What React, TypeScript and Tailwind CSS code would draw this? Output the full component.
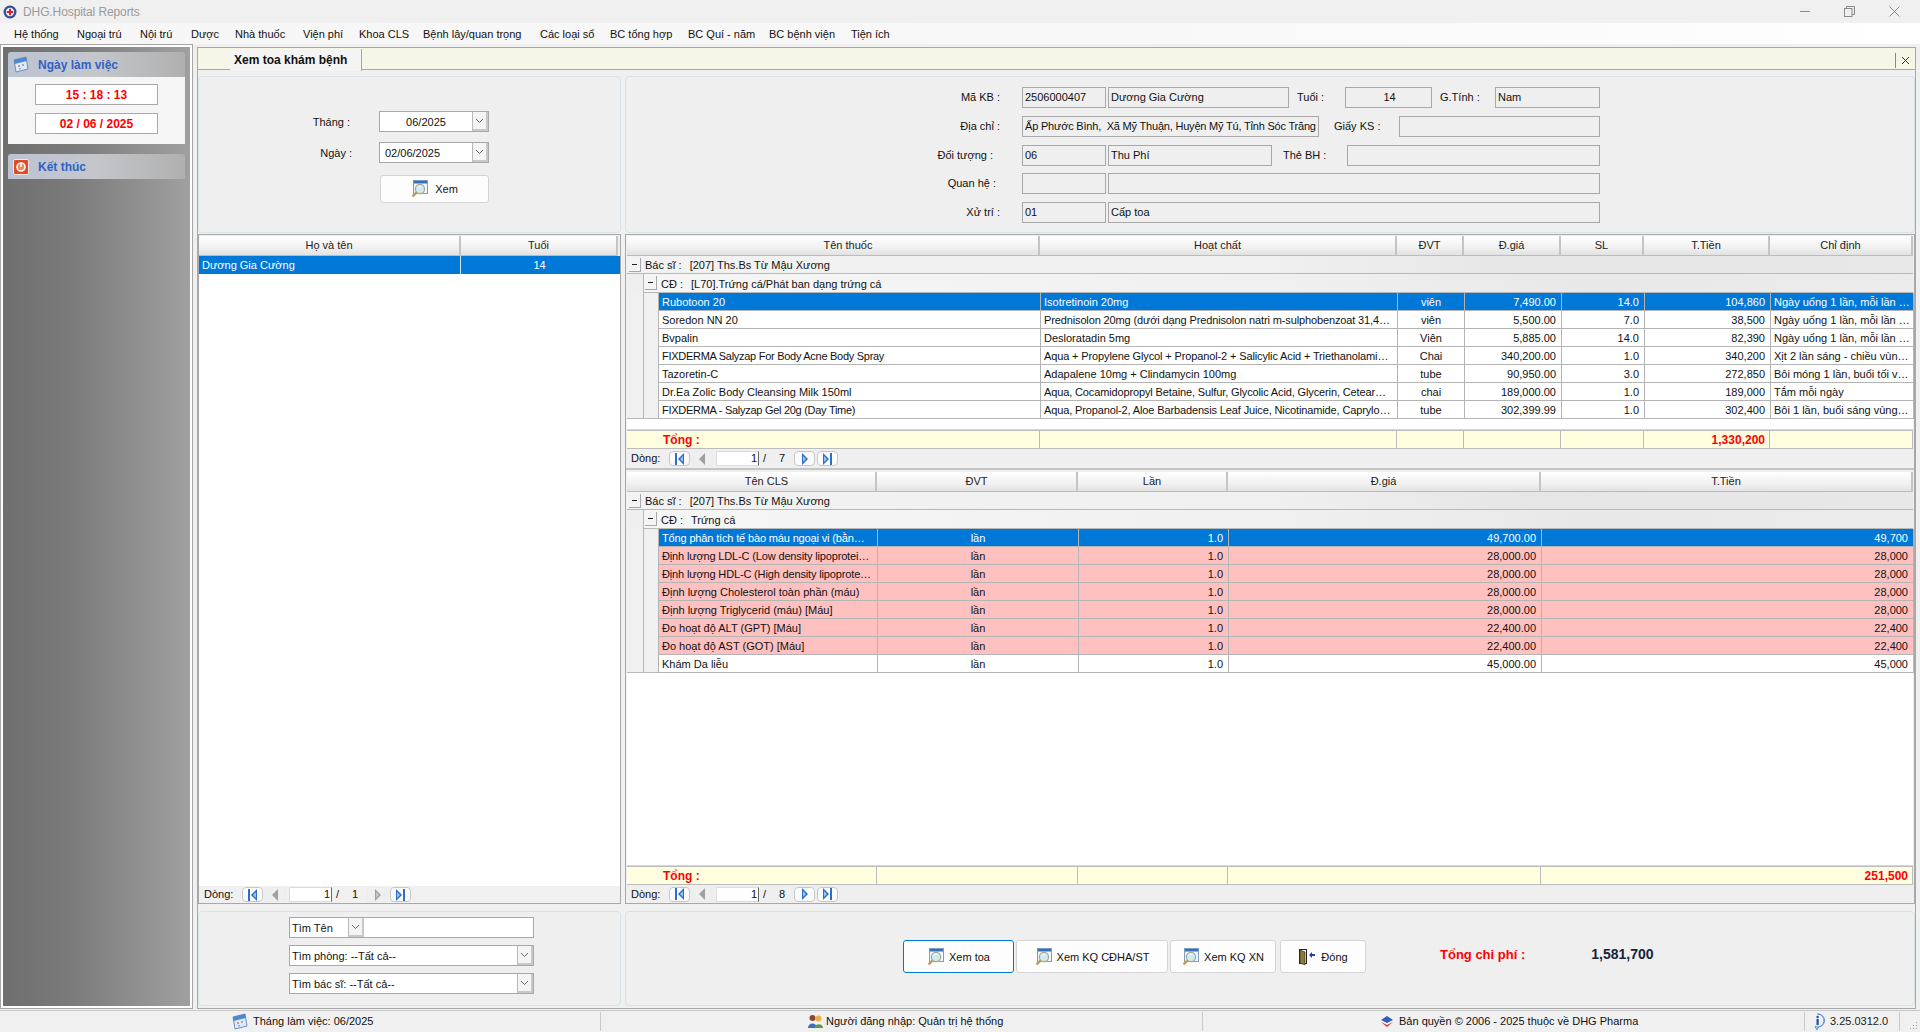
import React from "react";

const Mag = () => (
  <svg width="17" height="18" viewBox="0 0 17 18" className="shrink-0">
    <rect x="2.5" y="0.5" width="14" height="13" fill="#f2f6fb" stroke="#7d9cc4" />
    <rect x="3" y="1" width="13" height="2.5" fill="#2f6fc4" />
    <circle cx="9" cy="9" r="4.6" fill="#cfeaf0" stroke="#a9a78c" strokeWidth="1.2" />
    <path d="M7 7.5 A3 3 0 0 1 10 6" fill="none" stroke="#ffffff" strokeWidth="1" />
    <path d="M5.6 12.4 L1.5 16.5" stroke="#c49a4e" strokeWidth="2.4" />
  </svg>
);

const Cal = () => (
  <svg width="16" height="17" viewBox="0 0 16 17" className="shrink-0">
    <path d="M1 4 L13 1 L15 13 L3 16 Z" fill="#dfeaf8" stroke="#6a8fc0" />
    <path d="M1 4 L13 1 L13.7 5 L1.7 8 Z" fill="#4d87d0" />
    <rect x="5" y="9" width="2" height="2" fill="#e88a78" />
    <rect x="9" y="8" width="2" height="2" fill="#8fb0dc" />
    <rect x="6" y="12" width="2" height="1.5" fill="#8fb0dc" />
  </svg>
);

const Door = () => (
  <svg width="18" height="18" viewBox="0 0 18 18" className="shrink-0">
    <rect x="1.5" y="1.5" width="7" height="14" fill="#fff" stroke="#222" />
    <path d="M2 2 L7 4 V17 L2 15 Z" fill="#8a7a3c" stroke="#3a3418" strokeWidth="0.7" />
    <path d="M11 7 L14 4 V6 H17 V8 H14 V10 Z" fill="#1f3fb0" />
  </svg>
);

const Chev = () => (
  <svg width="9" height="6" viewBox="0 0 9 6">
    <path d="M1 1 L4.5 4.5 L8 1" fill="none" stroke="#666" />
  </svg>
);

const DropBtn = () => (
  <div className="w-[16px] h-full flex items-center justify-center bg-[#f4f4f4] border-l border-[#b8b8b8] border-r-2 border-b-2 border-r-[#c8c8c8] border-b-[#c8c8c8] shrink-0">
    <Chev />
  </div>
);

const NavGlyph = ({ kind, off }: { kind: string; off?: boolean }) => {
  const c = off ? "#a0a0a0" : "#2a6fc9";
  const inner = off ? "#c8c8c8" : "#9cc4ee";
  return (
    <div
      className={
        "w-[21px] h-[15px] rounded-[4px] border flex items-center justify-center shrink-0 " +
        (off ? "border-[#ececec] bg-[#efefef]" : "border-[#c4c8ce] bg-[#fbfbfb]")
      }
    >
      <svg width="11" height="12" viewBox="0 0 11 12">
        {kind === "first" && (
          <>
            <rect x="1" y="0" width="2" height="12" fill={c} />
            <path d="M10 0 V12 L4 6 Z" fill={c} />
            <path d="M9 3 V9 L6 6 Z" fill={inner} />
          </>
        )}
        {kind === "prev" && <path d="M8 0 V12 L2 6 Z" fill={c} />}
        {kind === "next" && (
          <>
            <path d="M3 0 V12 L9 6 Z" fill={c} />
            <path d="M4 3 V9 L7 6 Z" fill={inner} />
          </>
        )}
        {kind === "last" && (
          <>
            <path d="M1 0 V12 L7 6 Z" fill={c} />
            <path d="M2 3 V9 L5 6 Z" fill={inner} />
            <rect x="8" y="0" width="2" height="12" fill={c} />
          </>
        )}
      </svg>
    </div>
  );
};

const Nav = ({ total, nextOff }: { total: string; nextOff?: boolean }) => (
  <div className="flex items-center h-full gap-[2px]">
    <NavGlyph kind="first" />
    <NavGlyph kind="prev" off />
    <div className="w-[43px] h-[15px] ml-[1px] bg-white border border-[#dcdcdc] border-r-[#666] text-right pr-[1px] leading-[13px]">1</div>
    <span className="w-[31px] pl-[2px] flex justify-between pr-[7px]">
      <span>/</span>
      <span>{total}</span>
    </span>
    <NavGlyph kind="next" off={nextOff} />
    <NavGlyph kind="last" />
  </div>
);

const Header = ({ cols, labels, indent }: { cols: string; labels: string[]; indent?: boolean }) => (
  <div className={cols}>
    {labels.map((l, i) => (
      <div
        key={i}
        className={
          "h-[20px] flex items-center justify-center bg-[linear-gradient(180deg,#ffffff,#f1f1f1_60%,#e2e2e2)] border-r-2 border-r-[#c4c4c4] border-b border-b-[#bcbcbc] text-[#222] " +
          (indent && i === 0 ? "pl-[31px]" : "")
        }
      >
        {l}
      </div>
    ))}
  </div>
);

const Expander = () => (
  <div className="w-[12px] h-[14px] bg-[#f4f4f4] border-r border-b border-[#a8a8a8] flex items-center justify-center shrink-0">
    <div className="w-[5px] h-[1px] bg-[#222]" />
  </div>
);

const Group = ({ level, label, text }: { level: number; label: string; text: string }) => (
  <div
    className={
      level === 0
        ? "h-[18px] flex items-center pl-[2px] bg-[linear-gradient(90deg,#f2f2f2,#f0f0f0_50%,#e6e6e6_70%,#e8e8e8)] border-b border-[#b8b8b8]"
        : "h-[19px] flex items-center ml-[16px] pl-[1px] bg-[linear-gradient(90deg,#f6f6f6,#f0f0f0_50%,#e8e8e8_75%,#ececec)] border-l border-b border-[#b8b8b8]"
    }
  >
    <Expander />
    <span className="ml-[4px] pt-[2px]">{label}</span>
    <span className="ml-[8px] pt-[2px]">{text}</span>
  </div>
);

type Cell = { t: string; a?: string; track?: string };

const Row = ({ cols, cells, tone, last }: { cols: string; cells: Cell[]; tone: string; last?: boolean }) => {
  const bg = tone === "sel" ? "bg-[#0078d7] text-white" : tone === "pink" ? "bg-[#ffc0c0]" : "bg-white";
  return (
    <div className="flex h-[18px]">
      <div className={"w-[16px] bg-[#f0f0f0] shrink-0 " + (last ? "border-b border-[#b8b8b8]" : "")} />
      <div className={"w-[15px] bg-[#f0f0f0] border-l border-[#b8b8b8] shrink-0 " + (last ? "border-b" : "")} />
      <div className={cols + " border-r border-[#b4b4b4] " + bg}>
        {cells.map((c, i) => (
          <div
            key={i}
            className={
              "h-[18px] flex items-center pt-[2px] border-l border-b border-[#b4b4b4] whitespace-nowrap overflow-hidden " +
              (c.a === "r" ? "justify-end pr-[5px]" : c.a === "c" ? "justify-center" : "pl-[3px]") +
              " " +
              (c.track ?? "")
            }
          >
            {c.t}
          </div>
        ))}
      </div>
    </div>
  );
};

const Total = ({ cols, cells }: { cols: string; cells: string[] }) => (
  <div className={cols + " bg-[#ffffe0] border-y border-[#bcbcbc]"}>
    {cells.map((c, i) => (
      <div
        key={i}
        className={
          "h-[17px] flex items-center pt-[1px] border-r border-[#bcbcbc] text-[12px] font-bold text-[#ff0000] " +
          (i === 0 ? "pl-[36px]" : "justify-end pr-[4px]")
        }
      >
        {c}
      </div>
    ))}
  </div>
);

const drugCols = "grid grid-cols-[382px_357px_67px_97px_83px_126px_143px]";
const clsCols = "grid grid-cols-[219px_201px_150px_313px_372px]";

const drugs: string[][] = [
  ["Rubotoon 20", "Isotretinoin 20mg", "viên", "7,490.00", "14.0", "104,860", "Ngày uống 1 lần, mỗi lần …"],
  ["Soredon NN 20", "Prednisolon 20mg (dưới dạng Prednisolon natri m-sulphobenzoat 31,4…", "viên", "5,500.00", "7.0", "38,500", "Ngày uống 1 lần, mỗi lần …"],
  ["Bvpalin", "Desloratadin 5mg", "Viên", "5,885.00", "14.0", "82,390", "Ngày uống 1 lần, mỗi lần …"],
  ["FIXDERMA Salyzap For Body Acne Body Spray", "Aqua + Propylene Glycol + Propanol-2 + Salicylic Acid + Triethanolami…", "Chai", "340,200.00", "1.0", "340,200", "Xịt 2 lần sáng - chiều vùn…"],
  ["Tazoretin-C", "Adapalene 10mg + Clindamycin 100mg", "tube", "90,950.00", "3.0", "272,850", "Bôi móng 1 lần, buổi tối v…"],
  ["Dr.Ea Zolic Body Cleansing Milk 150ml", "Aqua, Cocamidopropyl Betaine, Sulfur, Glycolic Acid, Glycerin, Cetear…", "chai", "189,000.00", "1.0", "189,000", "Tắm mỗi ngày"],
  ["FIXDERMA - Salyzap Gel 20g (Day Time)", "Aqua, Propanol-2, Aloe Barbadensis Leaf Juice, Nicotinamide, Caprylo…", "tube", "302,399.99", "1.0", "302,400", "Bôi 1 lần, buổi sáng vùng…"],
];

const cls: string[][] = [
  ["Tổng phân tích tế bào máu ngoại vi (bằn…", "49,700.00", "49,700"],
  ["Định lượng LDL-C (Low density lipoprotei…", "28,000.00", "28,000"],
  ["Định lượng HDL-C (High density lipoprote…", "28,000.00", "28,000"],
  ["Định lượng Cholesterol toàn phần (máu)", "28,000.00", "28,000"],
  ["Định lượng Triglycerid (máu) [Máu]", "28,000.00", "28,000"],
  ["Đo hoạt độ ALT (GPT) [Máu]", "22,400.00", "22,400"],
  ["Đo hoạt độ AST (GOT) [Máu]", "22,400.00", "22,400"],
  ["Khám Da liễu", "45,000.00", "45,000"],
];

const menu: [string, string][] = [
  ["Hệ thống", "w-[63px]"],
  ["Ngoại trú", "w-[63px]"],
  ["Nội trú", "w-[51px]"],
  ["Dược", "w-[44px]"],
  ["Nhà thuốc", "w-[68px]"],
  ["Viện phí", "w-[56px]"],
  ["Khoa CLS", "w-[64px]"],
  ["Bệnh lây/quan trọng", "w-[117px]"],
  ["Các loại sổ", "w-[70px]"],
  ["BC tổng hợp", "w-[78px]"],
  ["BC Quí - năm", "w-[81px]"],
  ["BC bệnh viện", "w-[82px]"],
  ["Tiện ích", "w-[60px]"],
];

const fieldBase = "h-[21px] border border-[#a8a8a8] bg-[#efefef] flex items-center pl-[2px] shrink-0 whitespace-nowrap overflow-hidden ";

const Btn = ({ w, label, icon, active }: { w: string; label: string; icon: React.ReactNode; active?: boolean }) => (
  <div
    className={
      w +
      " h-[33px] rounded-[3px] bg-[#fdfdfd] flex items-center justify-center gap-[5px] border " +
      (active ? "border-[#0078d7]" : "border-[#d4d4d4]")
    }
  >
    {icon}
    <span className="pt-[2px]">{label}</span>
  </div>
);

export default function App() {
  return (
    <div className="w-[1920px] h-[1032px] overflow-hidden flex flex-col bg-[#f0f0f0] font-['Liberation_Sans',sans-serif] text-[11px] text-[#111]">
      {/* title bar */}
      <div className="h-[23px] flex items-center pl-[3px] pr-[3px] shrink-0">
        <svg width="14" height="14" viewBox="0 0 14 14">
          <circle cx="7" cy="7" r="6.5" fill="#2f4f9a" />
          <circle cx="7" cy="7" r="4.2" fill="#f4f4f4" />
          <path d="M6 3.8 H8 V6 H10.2 V8 H8 V10.2 H6 V8 H3.8 V6 H6 Z" fill="#d8202c" />
        </svg>
        <span className="ml-[6px] text-[12px] tracking-[-0.1px] text-[#9a9a9a]">DHG.Hospital Reports</span>
        <div className="ml-auto flex items-center">
          <div className="w-[45px] flex justify-center">
            <div className="w-[10px] h-[1px] bg-[#8a8a8a]" />
          </div>
          <div className="w-[45px] flex justify-center">
            <svg width="11" height="11" viewBox="0 0 11 11">
              <rect x="0.5" y="2.5" width="7.5" height="8" fill="none" stroke="#8a8a8a" />
              <path d="M2.5 2.5 V0.5 H10.5 V8.5 H8" fill="none" stroke="#8a8a8a" />
            </svg>
          </div>
          <div className="w-[45px] flex justify-center">
            <svg width="11" height="11" viewBox="0 0 11 11">
              <path d="M0.5 0.5 L10.5 10.5 M10.5 0.5 L0.5 10.5" stroke="#8a8a8a" />
            </svg>
          </div>
        </div>
      </div>

      {/* menu */}
      <div className="h-[21px] shrink-0 flex items-center pt-[1px] pl-[14px] bg-[linear-gradient(90deg,#f6f6f6,#f8f8f8_60%,#fcfcfc_85%,#ffffff)]">
        {menu.map(([m, w]) => (
          <span key={m} className={w + " whitespace-nowrap"}>
            {m}
          </span>
        ))}
      </div>

      {/* body */}
      <div className="flex-1 flex min-h-0">
        {/* sidebar */}
        <div className="w-[193px] shrink-0 border border-[#a6a6a6] mb-[1px]">
          <div className="h-full border-2 border-white bg-[linear-gradient(90deg,#6f6f6f,#7a7a7a_35%,#8e8e8e_70%,#a0a0a0)] px-[5px] pt-[5px]">
            <div className="h-[25px] rounded-t-[3px] flex items-center pl-[5px] gap-[9px] bg-[linear-gradient(90deg,#bcc4d2,#c4c6ca_50%,#b0b0b0)]">
              <Cal />
              <span className="text-[12px] font-bold text-[#2f62c6]">Ngày làm việc</span>
            </div>
            <div className="h-[67px] bg-[#f5f5f5] flex flex-col items-center pt-[7px] gap-[8px]">
              <div className="w-[123px] h-[21px] bg-white border border-[#a8a8a8] flex items-center justify-center text-[12px] font-bold text-[#ff0000] whitespace-pre">
                15 : 18 : 13
              </div>
              <div className="w-[123px] h-[21px] bg-white border border-[#a8a8a8] flex items-center justify-center text-[12px] font-bold text-[#ff0000] whitespace-pre">
                02 / 06 / 2025
              </div>
            </div>
            <div className="h-[25px] mt-[10px] rounded-t-[3px] flex items-center pl-[5px] gap-[9px] bg-[linear-gradient(90deg,#bcc4d2,#c4c6ca_50%,#b0b0b0)]">
              <svg width="16" height="16" viewBox="0 0 16 16" className="shrink-0">
                <rect x="0.5" y="0.5" width="15" height="15" rx="1.5" fill="#e0492a" stroke="#f4e6e0" />
                <circle cx="8" cy="8" r="4" fill="#f08a5a" stroke="#fff" strokeWidth="1.6" />
                <rect x="7.3" y="4" width="1.4" height="4" fill="#fff" />
              </svg>
              <span className="text-[12px] font-bold text-[#2f62c6]">Kết thúc</span>
            </div>
          </div>
        </div>

        {/* main */}
        <div className="flex-1 flex flex-col ml-[4px] mr-[4px] mt-[3px] mb-[1px] border border-[#a8a8a8] min-w-0">
          {/* tabs */}
          <div className="h-[22px] shrink-0 flex bg-[#f5f6e6] border-b border-[#a8a8a8] pl-[32px] relative">
            <div className="w-[132px] h-[22px] mt-[1px] bg-[#f4f4f4] border-r border-[#a8a8a8] flex items-center pl-[4px] text-[12px] font-bold">
              Xem toa khám bệnh
            </div>
            <div className="ml-auto mt-[5px] h-[15px] w-[20px] border-l border-[#888] flex items-center justify-center">
              <svg width="9" height="9" viewBox="0 0 9 9">
                <path d="M1 1 L8 8 M8 1 L1 8" stroke="#333" />
              </svg>
            </div>
          </div>

          <div className="flex-1 flex min-h-0">
            {/* left column */}
            <div className="w-[423px] shrink-0 flex flex-col pt-[6px]">
              <div className="h-[157px] rounded-[4px] border border-[#d8e2e6] bg-[#efefef] flex flex-col pt-[34px] shrink-0">
                <div className="flex items-center h-[21px]">
                  <span className="w-[151px] text-right pt-[1px]">Tháng :</span>
                  <div className="ml-[29px] w-[110px] h-[21px] bg-white border border-[#a8a8a8] flex items-center">
                    <span className="flex-1 text-center pt-[1px]">06/2025</span>
                    <DropBtn />
                  </div>
                </div>
                <div className="flex items-center h-[21px] mt-[10px]">
                  <span className="w-[153px] text-right pt-[1px]">Ngày :</span>
                  <div className="ml-[27px] w-[110px] h-[21px] bg-white border border-[#a8a8a8] flex items-center">
                    <span className="flex-1 pl-[5px] pt-[1px]">02/06/2025</span>
                    <DropBtn />
                  </div>
                </div>
                <div className="ml-[181px] mt-[12px] w-[109px]">
                  <div className="h-[28px] rounded-[3px] bg-[#fdfdfd] border border-[#d4d4d4] flex items-center justify-center gap-[7px]">
                    <Mag />
                    <span>Xem</span>
                  </div>
                </div>
              </div>

              <div className="h-[670px] mt-[1px] shrink-0 border border-[#a8a8a8] bg-white flex flex-col">
                <div className="pt-[1px] bg-[#efefef]">
                  <Header cols="grid grid-cols-[262px_157px]" labels={["Họ và tên", "Tuổi"]} />
                </div>
                <div className="grid grid-cols-[262px_157px] bg-[#0078d7] text-white h-[18px]">
                  <div className="flex items-center pl-[3px] border-r border-[#cfe4f7]">Dương Gia Cường</div>
                  <div className="flex items-center justify-center">14</div>
                </div>
                <div className="flex-1" />
                <div className="h-[17px] bg-[#f0f0f0] flex items-center pl-[5px] gap-[5px]">
                  <span className="w-[33px]">Dòng:</span>
                  <Nav total="1" nextOff />
                </div>
              </div>

              <div className="h-[95px] mt-[7px] shrink-0 rounded-[4px] border border-[#d8e2e6] bg-[#efefef] flex flex-col pl-[90px] pt-[5px] gap-[7px]">
                <div className="w-[245px] h-[21px] flex bg-white border border-[#a8a8a8] items-center">
                  <span className="w-[58px] pl-[2px] pt-[1px]">Tìm Tên</span>
                  <DropBtn />
                </div>
                <div className="w-[245px] h-[21px] flex bg-white border border-[#a8a8a8] items-center">
                  <span className="flex-1 pl-[2px] pt-[1px]">Tìm phòng: --Tất cả--</span>
                  <DropBtn />
                </div>
                <div className="w-[245px] h-[21px] flex bg-white border border-[#a8a8a8] items-center">
                  <span className="flex-1 pl-[2px] pt-[1px]">Tìm bác sĩ: --Tất cả--</span>
                  <DropBtn />
                </div>
              </div>
            </div>

            {/* right column */}
            <div className="flex-1 ml-[4px] flex flex-col pt-[6px] min-w-0">
              <div className="h-[157px] rounded-[4px] border border-[#d8e2e6] bg-[#efefef] shrink-0 flex flex-col pt-[10px]">
                <div className="flex h-[21px] items-center">
                  <span className="w-[374px] text-right">Mã KB :</span>
                  <div className={fieldBase + "ml-[22px] w-[84px]"}>2506000407</div>
                  <div className={fieldBase + "ml-[2px] w-[181px]"}>Dương Gia Cường</div>
                  <span className="ml-[8px] w-[48px]">Tuổi :</span>
                  <div className={fieldBase + "w-[87px] justify-center"}>14</div>
                  <span className="ml-[8px] w-[55px]">G.Tính :</span>
                  <div className={fieldBase + "w-[105px]"}>Nam</div>
                </div>
                <div className="flex h-[21px] items-center mt-[8px]">
                  <span className="w-[374px] text-right">Địa chỉ :</span>
                  <div className={fieldBase + "ml-[22px] w-[297px] whitespace-pre tracking-[-0.2px]"}>Ấp Phước Bình,  Xã Mỹ Thuận, Huyện Mỹ Tú, Tỉnh Sóc Trăng</div>
                  <span className="ml-[15px] w-[65px]">Giấy KS :</span>
                  <div className={fieldBase + "w-[201px]"} />
                </div>
                <div className="flex h-[21px] items-center mt-[8px]">
                  <span className="w-[367px] text-right">Đối tượng :</span>
                  <div className={fieldBase + "ml-[29px] w-[84px]"}>06</div>
                  <div className={fieldBase + "ml-[2px] w-[164px]"}>Thu Phí</div>
                  <span className="ml-[11px] w-[64px]">Thẻ BH :</span>
                  <div className={fieldBase + "w-[253px]"} />
                </div>
                <div className="flex h-[21px] items-center mt-[7px]">
                  <span className="w-[370px] text-right">Quan hệ :</span>
                  <div className={fieldBase + "ml-[26px] w-[84px]"} />
                  <div className={fieldBase + "ml-[2px] w-[492px]"} />
                </div>
                <div className="flex h-[21px] items-center mt-[8px]">
                  <span className="w-[374px] text-right">Xử trí :</span>
                  <div className={fieldBase + "ml-[22px] w-[84px]"}>01</div>
                  <div className={fieldBase + "ml-[2px] w-[492px]"}>Cấp toa</div>
                </div>
              </div>

              {/* grids */}
              <div className="h-[670px] mt-[1px] shrink-0 border border-[#a8a8a8] bg-[#efefef] flex flex-col">
                <div className="h-[235px] shrink-0 flex flex-col pt-[1px] pl-[1px] border-b-2 border-[#c4c4c4]">
                  <Header cols="grid grid-cols-[413px_357px_67px_97px_83px_126px_143px]" labels={["Tên thuốc", "Hoạt chất", "ĐVT", "Đ.giá", "SL", "T.Tiền", "Chỉ định"]} indent />
                  <div className="w-[1286px]">
                    <Group level={0} label="Bác sĩ :" text="[207] Ths.Bs Từ Mậu Xương" />
                    <Group level={1} label="CĐ :" text="[L70].Trứng cá/Phát ban dạng trứng cá" />
                    {drugs.map((d, i) => (
                      <Row
                        key={i}
                        cols={drugCols}
                        tone={i === 0 ? "sel" : "plain"}
                        last={i === drugs.length - 1}
                        cells={[
                          { t: d[0], track: d[0].startsWith("FIXDERMA") ? "tracking-[-0.28px]" : "" },
                          { t: d[1], track: d[1].endsWith("…") ? "tracking-[-0.13px]" : "" },
                          { t: d[2], a: "c" },
                          { t: d[3], a: "r" },
                          { t: d[4], a: "r" },
                          { t: d[5], a: "r" },
                          { t: d[6] },
                        ]}
                      />
                    ))}
                    <div className="h-[11px] bg-white border-b border-[#d8d8d8]" />
                    <Total cols="grid grid-cols-[413px_357px_67px_97px_83px_126px_143px]" cells={["Tổng :", "", "", "", "", "1,330,200", ""]} />
                  </div>
                  <div className="flex-1 flex items-center pl-[4px] gap-[5px]">
                    <span className="w-[33px]">Dòng:</span>
                    <Nav total="7" />
                  </div>
                </div>

                <div className="flex-1 flex flex-col min-h-0 pt-[2px] pl-[1px]">
                  <Header cols="grid grid-cols-[250px_201px_150px_313px_372px]" labels={["Tên CLS", "ĐVT", "Lần", "Đ.giá", "T.Tiền"]} indent />
                  <div className="w-[1286px]">
                    <Group level={0} label="Bác sĩ :" text="[207] Ths.Bs Từ Mậu Xương" />
                    <Group level={1} label="CĐ :" text="Trứng cá" />
                    {cls.map((c, i) => (
                      <Row
                        key={i}
                        cols={clsCols}
                        tone={i === 0 ? "sel" : i < 7 ? "pink" : "plain"}
                        last={i === cls.length - 1}
                        cells={[
                          { t: c[0], track: c[0].endsWith("…") ? "tracking-[-0.15px]" : "" },
                          { t: "lần", a: "c" },
                          { t: "1.0", a: "r" },
                          { t: c[1], a: "r" },
                          { t: c[2], a: "r" },
                        ]}
                      />
                    ))}
                  </div>
                  <div className="flex-1 bg-white w-[1286px] border-b border-[#d8d8d8]" />
                  <div className="w-[1286px]">
                    <Total cols="grid grid-cols-[250px_201px_150px_313px_372px]" cells={["Tổng :", "", "", "", "251,500"]} />
                  </div>
                  <div className="h-[18px] flex items-center pl-[4px] gap-[5px]">
                    <span className="w-[33px]">Dòng:</span>
                    <Nav total="8" />
                  </div>
                </div>
              </div>

              <div className="h-[95px] mt-[7px] shrink-0 rounded-[4px] border border-[#d8e2e6] bg-[#efefef] flex items-start pt-[28px] pl-[277px]">
                <Btn w="w-[111px]" label="Xem toa" icon={<Mag />} active />
                <div className="w-[2px]" />
                <Btn w="w-[152px]" label="Xem KQ CĐHA/ST" icon={<Mag />} />
                <div className="w-[2px]" />
                <Btn w="w-[106px]" label="Xem KQ XN" icon={<Mag />} />
                <div className="w-[4px]" />
                <Btn w="w-[86px]" label="Đóng" icon={<Door />} />
                <span className="ml-[74px] mt-[5px] text-[13px] font-bold text-[#ff0000]">Tổng chi phí :</span>
                <span className="ml-[66px] mt-[4px] text-[14px] font-bold text-[#16233a]">1,581,700</span>
              </div>
            </div>
          </div>
        </div>
      </div>

      {/* status */}
      <div className="h-[22px] shrink-0 flex items-center bg-[#f0f0f0] border-t border-[#c8c8c8]">
        <div className="w-[601px] h-[19px] shrink-0 flex items-center gap-[5px] pl-[232px] border-r border-[#c8c8c8]">
          <Cal />
          <span>Tháng làm việc: 06/2025</span>
        </div>
        <div className="w-[602px] h-[19px] shrink-0 flex items-center gap-[2px] pl-[206px] border-r border-[#c8c8c8]">
          <svg width="17" height="15" viewBox="0 0 17 15" className="shrink-0">
            <circle cx="5.5" cy="4" r="3" fill="#8a4a2a" />
            <path d="M1 14 C1 8 10 8 10 14 Z" fill="#3a6fb8" />
            <circle cx="11.5" cy="4.5" r="3" fill="#e8b04a" />
            <path d="M7.5 14 C7.5 9 16 9 16 14 Z" fill="#5a9a4a" />
          </svg>
          <span>Người đăng nhập: Quản trị hệ thống</span>
        </div>
        <div className="w-[602px] h-[19px] shrink-0 flex items-center gap-[5px] pl-[177px] border-r border-[#c8c8c8]">
          <svg width="14" height="13" viewBox="0 0 14 13" className="shrink-0">
            <path d="M7 1 L13 5 L7 8 L1 5 Z" fill="#2f5fae" />
            <path d="M1 7 L7 10 L13 7 L7 12 Z" fill="#d8303a" />
          </svg>
          <span>Bản quyền © 2006 - 2025 thuộc về DHG Pharma</span>
        </div>
        <div className="w-[95px] h-[19px] shrink-0 flex items-center gap-[5px] pl-[5px] border-r border-[#c8c8c8]">
          <svg width="15" height="18" viewBox="0 0 15 18" className="shrink-0">
            <path d="M7.5 1 A6.5 6.5 0 1 1 5 13.5 L7 17 L8.5 14 A6.5 6.5 0 0 0 7.5 1 Z" fill="#cfe6fb" stroke="#5b93d6" />
            <rect x="6.5" y="6" width="2.2" height="6" fill="#1f4fa8" />
            <circle cx="7.6" cy="4" r="1.2" fill="#1f4fa8" />
          </svg>
          <span className="text-[#222]">3.25.0312.0</span>
        </div>
        <div className="flex-1 h-full flex items-end justify-end pr-[2px] pb-[2px]">
          <svg width="9" height="9" viewBox="0 0 9 9">
            <path d="M7 1h1v1H7zM4 4h1v1H4zM7 4h1v1H7zM1 7h1v1H1zM4 7h1v1H4zM7 7h1v1H7z" fill="#a0a0a0" />
          </svg>
        </div>
      </div>
    </div>
  );
}
